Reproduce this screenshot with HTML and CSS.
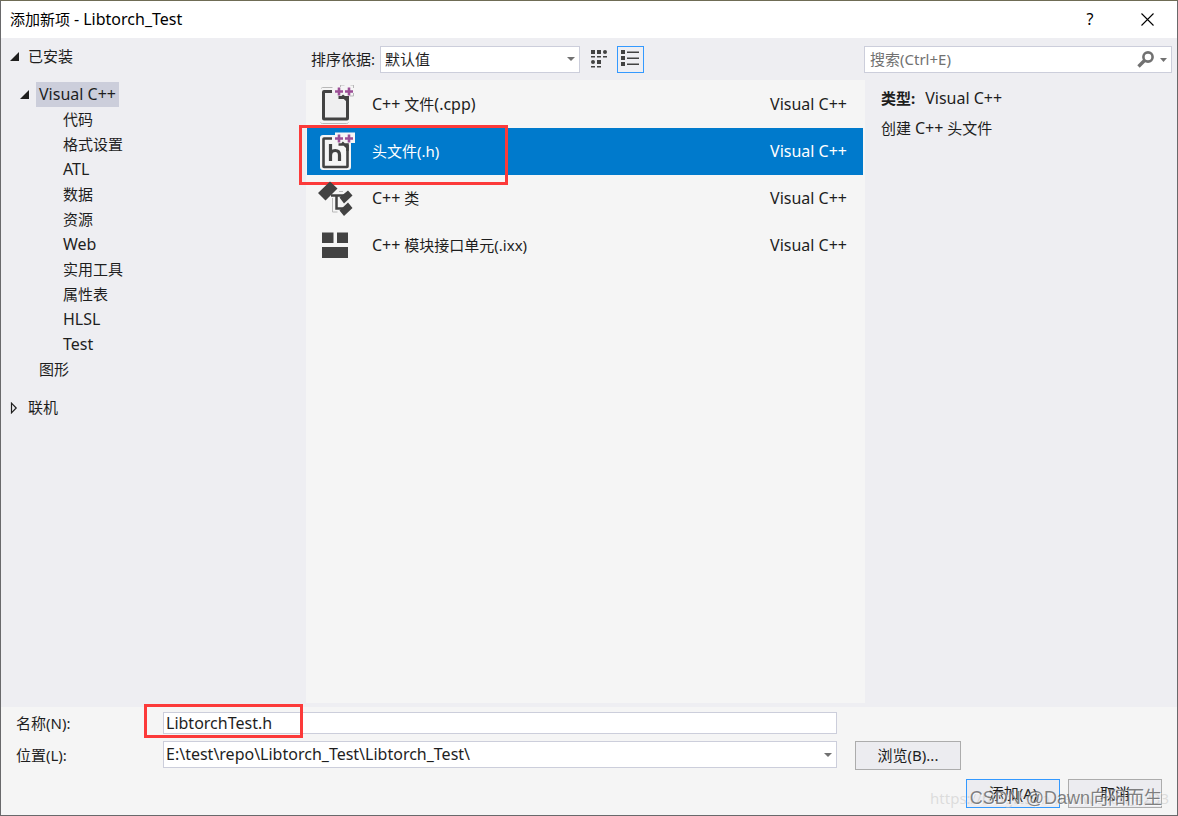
FILE: index.html
```html
<!DOCTYPE html>
<html lang="zh-CN">
<head>
<meta charset="utf-8">
<title>添加新项 - Libtorch_Test</title>
<link rel="stylesheet" href="styles.css">
</head>
<body>
<div class="dialog">
  <header class="titlebar">
    <h1 class="title">添加新项 <span class="latin">- Libtorch_Test</span></h1>
    <button class="title-button help" type="button" aria-label="帮助">?</button>
    <button class="title-button" type="button" aria-label="关闭">
      <svg width="13" height="13" viewBox="0 0 13 13"><path d="M.5 .5l12 12M12.5 .5l-12 12" stroke="#000" stroke-width="1.1" fill="none"/></svg>
    </button>
  </header>

  <main class="main">
    <nav class="tree">
      <button class="node" type="button"><svg class="twisty" width="9" height="9" viewBox="0 0 9 9"><path d="M9 0v9H0z" fill="#1e1e1e"/></svg>已安装</button>
      <ul class="group">
        <li>
          <button class="node sub" type="button"><svg class="twisty" width="9" height="9" viewBox="0 0 9 9"><path d="M9 0v9H0z" fill="#1e1e1e"/></svg><span class="current latin">Visual C++</span></button>
          <ul class="leaves">
            <li>代码</li>
            <li>格式设置</li>
            <li class="latin">ATL</li>
            <li>数据</li>
            <li>资源</li>
            <li class="latin">Web</li>
            <li>实用工具</li>
            <li>属性表</li>
            <li class="latin">HLSL</li>
            <li class="latin">Test</li>
          </ul>
        </li>
        <li class="plain">图形</li>
      </ul>
      <button class="node" type="button"><svg class="twisty" width="9" height="12" viewBox="0 0 9 12"><path d="M1.5 1.2v9.6L6.2 6z" fill="none" stroke="#1e1e1e" stroke-width="1.2"/></svg>联机</button>
    </nav>

    <section class="center">
      <div class="toolbar">
        <label for="sort">排序依据:</label>
        <span class="combo sort">
          <select id="sort"><option>默认值</option></select>
          <svg class="arrow" width="8" height="4" viewBox="0 0 8 4"><path d="M0 0h8L4 4z" fill="#717171"/></svg>
        </span>
        <button class="view" type="button" aria-label="小图标">
          <svg width="19" height="19" viewBox="0 0 19 19" fill="#424242"><path d="M1 0h4v4H1zM7 0h4v4H7zM1 6h4v1.5H1zM7 6h4v1.5H7zM13 6h4v1.5h-4zM7 10h4v4H7zM1 16h4v1.5H1zM7 16h4v1.5H7z"/><circle cx="15" cy="2" r="2"/><circle cx="3" cy="12" r="2"/></svg>
        </button>
        <button class="view active" type="button" aria-label="中等图标">
          <svg width="19" height="19" viewBox="0 0 19 19" fill="#424242"><path d="M0 0h4v4H0zM0 6h4v4H0zM0 12h4v4H0zM6 1.500h12V3H6zM6 7.500h12V9H6zM6 13.500h12V15H6z"/></svg>
        </button>
      </div>
      <ul class="templates">
        <li class="item">
          <svg class="icon" width="38" height="40" viewBox="1 1 38 40"><path d="M4.500 4.500q0-1 1-1h10M3.500 38.500q.5 1 2 1h24q1.500 0 2-1M23.500 3V1h4M33.500 1h3v3M36.500 9v3h-4" fill="none" stroke="#b8b8b8"/><path d="M15 7.500H7q-.5 0-.5.5v26.500q0 .5.500.5h23q.5 0 .5-.5V17L26 12.500" fill="#efeff0" stroke="#424242" stroke-width="3"/><path d="M21.500 10.500H25l7 6.500v3h-9v-4h-1.500z" fill="#efeff0"/><path d="M21.500 13.500h9V20M25 11.500l6 5.500" fill="none" stroke="#424242" stroke-width="3"/><path d="M18 7.500h8M22 3.500v8M28 7.500h8M32 3.500v8" stroke="#9b4f96" stroke-width="2.600"/></svg>
          <span class="name"><span class="latin">C++</span> 文件<span class="latin">(.cpp)</span></span><span class="latin">Visual C++</span>
        </li>
        <li class="item selected">
          <svg class="icon" width="38" height="40" viewBox="1 1 38 40"><path d="M6 4h12V1.500h20V12h-4v24q0 3-3 3H6q-3 0-3-3V7q0-3 3-3z" fill="#f5f5f5"/><path d="M15 7.500H7q-.5 0-.5.5v27.500q0 .5.500.5h23q.5 0 .5-.5V14" fill="none" stroke="#424242" stroke-width="2.600"/><path d="M21.500 13.500h9V20M25 11.500l6 5.500" fill="none" stroke="#424242" stroke-width="2.600"/><path d="M13.500 13v17M13.500 24.500q0-5 4.800-5 4.200 0 4.200 4.500V30" fill="none" stroke="#424242" stroke-width="3.200"/><path d="M18 7.500h8M22 3.500v8M28 7.500h8M32 3.500v8" stroke="#9b4f96" stroke-width="2.600"/></svg>
          <span class="name">头文件(.h)</span><span class="latin">Visual C++</span>
          <span class="mark mark-item"></span>
        </li>
        <li class="item">
          <svg class="icon" width="38" height="40" viewBox="1 1 38 40"><path d="M15.500 20v14h5M22 13.500h4" fill="none" stroke="#b8b8b8"/><path d="M14 17.500h15M19.500 17v13.500h9" fill="none" stroke="#424242" stroke-width="2.500"/><path d="M1 15L13 3.500l7.500 7L8.500 22.500zM22.500 19.500L31 12.500l4.500 5-8.500 8zM22.500 32.500L31 24.500l4.500 5.500-8.500 8z" fill="#424242"/></svg>
          <span class="name"><span class="latin">C++</span> 类</span><span class="latin">Visual C++</span>
        </li>
        <li class="item">
          <svg class="icon" width="38" height="40" viewBox="1 1 38 40"><path d="M5 7.500h11.500V18H5zM20 7.500h11V18H20zM5 22h26v11H5z" fill="#424242"/></svg>
          <span class="name"><span class="latin">C++</span> 模块接口单元(.ixx)</span><span class="latin">Visual C++</span>
        </li>
      </ul>
    </section>

    <aside class="details">
      <div class="search">
        <input type="search" placeholder="搜索(Ctrl+E)" aria-label="搜索">
        <svg width="17" height="17" viewBox="0 0 17 17"><circle cx="11" cy="6" r="4.600" fill="none" stroke="#717171" stroke-width="2.600"/><path d="M7.500 9.500L1.500 15.500" stroke="#717171" stroke-width="3.400"/></svg>
        <svg width="7" height="4" viewBox="0 0 7 4"><path d="M0 0h7L3.500 4z" fill="#717171"/></svg>
      </div>
      <div class="info">
        <p><b>类型:</b><span class="latin">Visual C++</span></p>
        <div>创建 <span class="latin">C++</span> 头文件</div>
      </div>
    </aside>
  </main>

  <footer class="footer">
    <div class="row">
      <label for="name">名称(N):</label>
      <span class="field">
        <input class="text latin" id="name" type="text" value="LibtorchTest.h">
        <span class="mark mark-name"></span>
      </span>
    </div>
    <div class="row">
      <label for="location">位置(L):</label>
      <span class="combo field">
        <select class="latin" id="location"><option>E:\test\repo\Libtorch_Test\Libtorch_Test\</option></select>
        <svg class="arrow" width="8" height="4" viewBox="0 0 8 4"><path d="M0 0h8L4 4z" fill="#717171"/></svg>
      </span>
      <button class="button browse" type="button">浏览(B)...</button>
    </div>
    <div class="actions">
      <button class="button primary" type="button">添加(A)</button>
      <button class="button" type="button">取消</button>
      <span class="watermark url">https://blog.csdn.net/weixin_4233</span>
      <span class="watermark author">CSDN @Dawn向阳而生</span>
    </div>
  </footer>
</div>
</body>
</html>
```
FILE: styles.css
```css
* {
  box-sizing: border-box;
}

body {
  margin: 0;
  font: 15px/25px "Noto Sans", "Noto Sans CJK SC", sans-serif;
  color: #1e1e1e;
}

button,
input,
select {
  font: inherit;
  color: inherit;
}

button {
  padding: 0;
  border: 0;
  background: none;
}

ul {
  margin: 0;
  padding: 0;
  list-style: none;
}

svg {
  flex: none;
  display: block;
}

.latin {
  font-size: 16px;
}

.dialog {
  display: flex;
  flex-direction: column;
  min-height: 100vh;
  border: 1px solid #69696b;
  border-top-color: #6f6c55;
  background: #eeeef2;
}

.titlebar {
  display: flex;
  align-items: center;
  height: 37px;
  padding: 0 7px 0 9px;
  background: #fff;
  color: #000;
}

.title {
  flex: 1;
  margin: 0;
  font-size: 15px;
  font-weight: 400;
}

.title-button {
  display: grid;
  place-items: center;
  width: 46px;
  height: 36px;
}

.help {
  margin-right: 11px;
  font-size: 16px;
}

.main {
  flex: 1;
  display: grid;
  grid-template-columns: 305px minmax(0, 559fr) minmax(0, 312fr);
}

.tree {
  padding: 6px 0 0 9px;
}

.node {
  display: flex;
  align-items: center;
  height: 25px;
}

.twisty {
  width: 9px;
  margin-right: 9px;
}

.group {
  margin: 13px 0;
}

.sub {
  padding-left: 10px;
}

.sub .twisty {
  margin-right: 7px;
}

.current {
  padding: 0 3px;
  background: #cccedb;
}

.leaves {
  padding-left: 53px;
}

.leaves li {
  height: 25px;
}

.plain {
  padding-left: 29px;
}

.center {
  display: flex;
  flex-direction: column;
  padding-bottom: 4px;
}

.toolbar {
  display: flex;
  align-items: center;
  height: 42px;
  padding-left: 5px;
}

.combo {
  display: grid;
  grid-template-columns: minmax(0, 1fr);
}

.combo > * {
  grid-area: 1 / 1;
}

.combo select {
  height: 27px;
  padding: 0 4px;
  border: 1px solid #cccedb;
  border-radius: 0;
  background: #fff;
  appearance: none;
}

.arrow {
  place-self: center end;
  margin-right: 5px;
  pointer-events: none;
}

.sort {
  width: 200px;
  margin: 0 6px 0 5px;
}

.view {
  display: grid;
  place-items: center;
  width: 27px;
  height: 27px;
  margin-right: 4px;
}

.active {
  border: 1px solid #3399ff;
}

.templates {
  flex: 1;
  padding: 1px 2px 0 1px;
  background: #f5f5f5;
}

.item {
  position: relative;
  display: flex;
  align-items: center;
  height: 47px;
  padding: 0 16px 0 11px;
}

.icon {
  margin-right: 16px;
}

.name {
  flex: 1;
}

.selected {
  background: #007acc;
  color: #fff;
}

.mark {
  position: absolute;
  border: 3px solid #fc3a3a;
  pointer-events: none;
}

.mark-item {
  top: -3px;
  left: -8px;
  width: 209px;
  height: 60px;
}

.mark-name {
  top: -8px;
  left: -19px;
  width: 159px;
  height: 34px;
}

.details {
  padding: 8px 5px 0 0;
}

.search {
  display: flex;
  align-items: center;
  gap: 6px;
  height: 27px;
  margin-left: -1px;
  padding: 0 4px 0 5px;
  border: 1px solid #cccedb;
  background: #fff;
}

.search input {
  flex: 1;
  min-width: 0;
  padding: 0;
  border: 0;
  background: none;
  outline: 0;
  appearance: none;
}

.search input::placeholder {
  color: #717171;
}

.info {
  padding: 13px 0 0 16px;
}

.info p {
  display: flex;
  gap: 10px;
  margin: 0 0 5px;
}

.footer {
  display: flex;
  flex-direction: column;
  padding: 5px 15px 7px;
  background: #f5f5f5;
}

.row {
  display: flex;
  align-items: center;
  height: 22px;
  margin-bottom: 7px;
  padding-right: 325px;
}

.row label {
  flex: none;
  width: 147px;
}

.row + .row {
  height: 29px;
  margin-bottom: 9px;
  padding-right: 201px;
}

.field {
  position: relative;
  flex: 1;
}

.text {
  display: block;
  width: 100%;
  height: 22px;
  padding: 0 2px;
  border: 1px solid #cccedb;
  background: #fff;
}

.row .combo {
  align-self: flex-start;
}

.row select {
  padding: 0 2px;
}

.button {
  width: 94px;
  height: 29px;
  border: 1px solid #acacac;
  background: #ececf0;
}

.browse {
  width: 106px;
  margin-left: 18px;
}

.primary {
  border-color: #3399ff;
}

.actions {
  position: relative;
  display: flex;
  justify-content: flex-end;
  gap: 8px;
}

.watermark {
  position: absolute;
  white-space: nowrap;
  pointer-events: none;
}

.url {
  right: -7px;
  bottom: -3px;
  font-size: 15px;
  color: rgba(190, 190, 190, 0.45);
}

.author {
  right: 0;
  bottom: -3px;
  font: 18px/25px "Liberation Sans", "Noto Sans CJK SC", sans-serif;
  color: rgba(90, 90, 90, 0.75);
  text-shadow: 1px 1px 0 rgba(255, 255, 255, 0.7);
}
```
